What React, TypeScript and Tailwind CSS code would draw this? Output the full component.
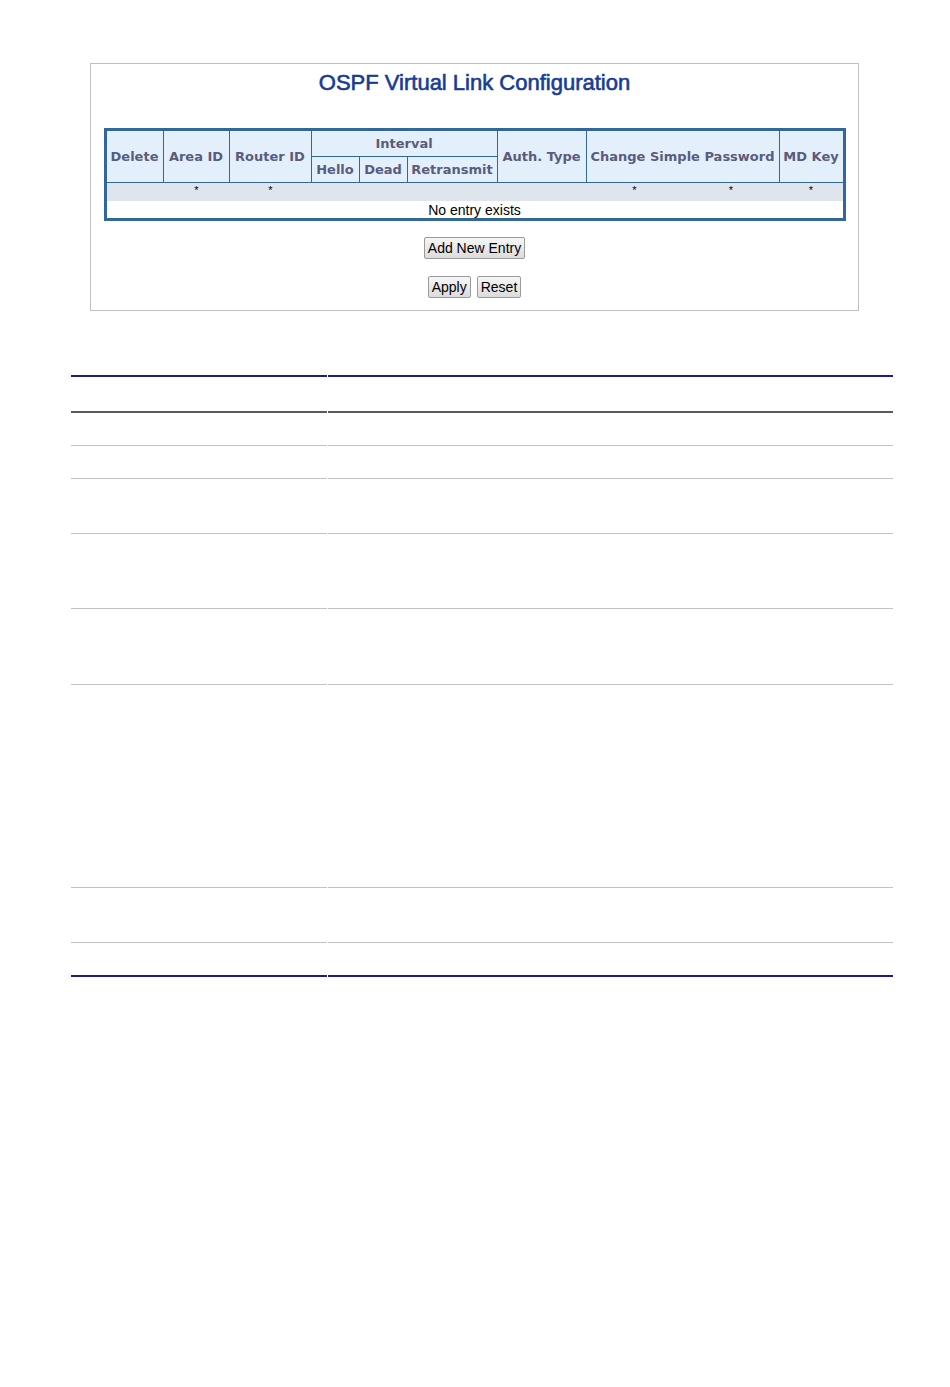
import React from 'react';

const thCell =
    'flex items-center justify-center bg-[#e4effc] text-[13px] font-bold text-[#5a5c7c] whitespace-nowrap';

// row heights include the 1px bottom rule
const bodyRows = [
    { h: 'h-[33px]', last: false },
    { h: 'h-[33px]', last: false },
    { h: 'h-[55px]', last: false },
    { h: 'h-[75px]', last: false },
    { h: 'h-[76px]', last: false },
    { h: 'h-[203px]', last: false },
    { h: 'h-[55px]', last: false },
    { h: 'h-[34px]', last: true },
];

function Btn({ label }: { label: string }) {
    return (
        <button className="h-[22px] rounded-[2px] border border-[#9a9a9a] bg-linear-to-b from-[#f6f6f6] to-[#dcdcdc] px-[3px] font-['Liberation_Sans',Arial,sans-serif] text-[14px] leading-none text-black">
            {label}
        </button>
    );
}

export default function App() {
    return (
        <div className="min-h-[1387px] w-[950px] bg-white pt-[63px]">
            {/* config panel */}
            <div className="ml-[90px] flex w-[769px] flex-col items-center border border-[#c0c0c0] pt-[6px] pb-[12px]">
                <h1 className="font-['Liberation_Sans',Arial,sans-serif] text-[22px] leading-[26px] font-normal text-[#163c96] [-webkit-text-stroke:0.6px_#163c96]">
                    OSPF Virtual Link Configuration
                </h1>

                <div className="mt-[32px] w-[742px] border-[3px] border-[#336699] font-['DejaVu_Sans',Verdana,sans-serif]">
                    {/* header */}
                    <div className="grid grid-cols-[56px_65px_81px_47px_47px_89px_88px_192px_63px] grid-rows-[25px_25px] gap-px bg-[#336699] pb-px">
                        <div className={`${thCell} row-span-2`}>Delete</div>
                        <div className={`${thCell} row-span-2`}>Area ID</div>
                        <div className={`${thCell} row-span-2`}>Router ID</div>
                        <div className={`${thCell} col-span-3`}>Interval</div>
                        <div className={`${thCell} row-span-2`}>Auth. Type</div>
                        <div className={`${thCell} row-span-2`}>Change Simple Password</div>
                        <div className={`${thCell} row-span-2`}>MD Key</div>
                        <div className={thCell}>Hello</div>
                        <div className={thCell}>Dead</div>
                        <div className={thCell}>Retransmit</div>
                    </div>
                    {/* template row */}
                    <div className="grid h-[18px] grid-cols-[57px_66px_82px_48px_48px_90px_89px_96px_97px_63px] bg-[#dfe5ed] pt-[1px] text-center font-['Liberation_Sans',Arial,sans-serif] text-[11px] leading-[13px] text-black">
                        <div />
                        <div>*</div>
                        <div>*</div>
                        <div />
                        <div />
                        <div />
                        <div />
                        <div>*</div>
                        <div>*</div>
                        <div>*</div>
                    </div>
                    <div className="flex h-[17px] items-center justify-center bg-white font-['Liberation_Sans',Arial,sans-serif] text-[14px] leading-none text-black">
                        No entry exists
                    </div>
                </div>

                <div className="mt-[16px] flex">
                    <Btn label="Add New Entry" />
                </div>
                <div className="mt-[17px] flex gap-[6px]">
                    <Btn label="Apply" />
                    <Btn label="Reset" />
                </div>
            </div>

            {/* description table */}
            <div className="mt-[64px] ml-[71px] w-[822px]">
                <div className="grid h-[38px] grid-cols-[256px_565px] gap-x-px">
                    <div className="border-t-2 border-b-2 border-t-[#1c1c8c] border-b-[#5a5a5a]" />
                    <div className="border-t-2 border-b-2 border-t-[#1c1c8c] border-b-[#5a5a5a]" />
                </div>
                {bodyRows.map((r, i) => (
                    <div key={i} className={`grid grid-cols-[256px_565px] gap-x-px ${r.h}`}>
                        <div className={r.last ? 'border-b-2 border-[#1c1c8c]' : 'border-b border-[#c2c2c2]'} />
                        <div className={r.last ? 'border-b-2 border-[#1c1c8c]' : 'border-b border-[#c2c2c2]'} />
                    </div>
                ))}
            </div>
        </div>
    );
}
